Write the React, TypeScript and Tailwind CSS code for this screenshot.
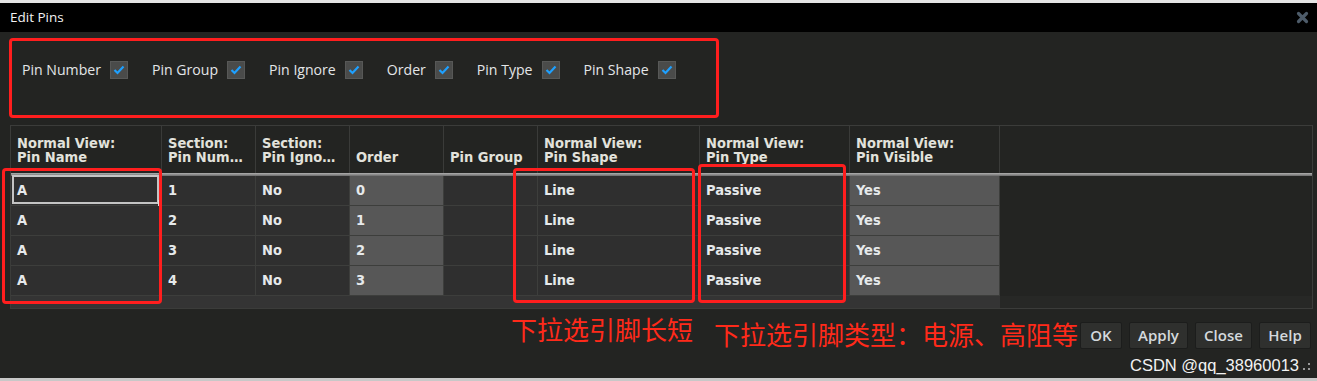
import React from 'react';

const CELL_FONT = { fontFamily: '"DejaVu Sans Condensed", "DejaVu Sans", sans-serif' };
const UI_FONT = { fontFamily: '"Open Sans", "Noto Sans", sans-serif' };
const CJK_FONT = { fontFamily: '"Noto Sans CJK SC", "Noto Sans", sans-serif' };

const columns = [
  { w: 'w-[151px]', head: ['Normal View:', 'Pin Name'], light: false, vals: ['A', 'A', 'A', 'A'] },
  { w: 'w-[94px]', head: ['Section:', 'Pin Num…'], light: false, vals: ['1', '2', '3', '4'] },
  { w: 'w-[94px]', head: ['Section:', 'Pin Igno…'], light: false, vals: ['No', 'No', 'No', 'No'] },
  { w: 'w-[94px]', head: ['Order'], light: true, vals: ['0', '1', '2', '3'] },
  { w: 'w-[94px]', head: ['Pin Group'], light: false, vals: ['', '', '', ''] },
  { w: 'w-[162px]', head: ['Normal View:', 'Pin Shape'], light: false, vals: ['Line', 'Line', 'Line', 'Line'] },
  { w: 'w-[150px]', head: ['Normal View:', 'Pin Type'], light: false, vals: ['Passive', 'Passive', 'Passive', 'Passive'] },
  { w: 'w-[150px]', head: ['Normal View:', 'Pin Visible'], light: true, vals: ['Yes', 'Yes', 'Yes', 'Yes'] },
];

const toggles = ['Pin Number', 'Pin Group', 'Pin Ignore', 'Order', 'Pin Type', 'Pin Shape'];

function Check() {
  return (
    <div className="w-[18px] h-[18px] bg-[#4a4b4a] border border-[#575857] flex items-center justify-center">
      <svg width="12" height="10" viewBox="0 0 12 10">
        <path d="M1.5 5 L4.5 8 L10.5 1.5" fill="none" stroke="#1ea0ff" strokeWidth="2.2" />
      </svg>
    </div>
  );
}

function PinTable() {
  return (
    <div className="ml-[10px] w-[1303px] border border-[#3b3c3a] bg-[#232422]" style={CELL_FONT}>
      {/* header */}
      <div className="flex h-[47px]">
        {columns.map((c, i) => (
          <div
            key={i}
            className={`${c.w} shrink-0 border-r border-[#3a3b39] flex flex-col justify-end pb-[9px] pl-[6px] text-[14.5px] leading-[14px] font-bold text-[#e2e2dc]`}
          >
            {c.head.map((h) => (
              <span key={h} className="whitespace-nowrap">{h}</span>
            ))}
          </div>
        ))}
        <div className="flex-1" />
      </div>
      <div className="h-[3px] bg-gradient-to-b from-[#b0b0b0] to-[#6c6c6c]" />
      {/* rows */}
      {[0, 1, 2, 3].map((r) => (
        <div key={r} className="flex h-[30px]">
          {columns.map((c, i) => (
            <div
              key={i}
              className={`${c.w} shrink-0 relative border-r border-b border-[#3d3e3c] flex items-center pl-[6px] text-[14.5px] font-bold text-[#e6e9eb] ${c.light ? 'bg-[#575757]' : 'bg-[#2f2f2f]'}`}
            >
              {c.vals[r]}
              {r === 0 && i === 0 && (
                <>
                  <div className="absolute left-[1px] top-[-1px] right-[2px] bottom-[1px] border-2 border-[#c4c4c4]" />
                  <div className="absolute right-[-3px] bottom-[-2px] w-[6px] h-[7px] bg-[#e0e0e0]" />
                </>
              )}
            </div>
          ))}
          <div className="flex-1 border-b border-[#232422]" />
        </div>
      ))}
      <div className="flex h-[12px]">
        <div className="w-[989px] bg-[#343434]" />
        <div className="flex-1 bg-[#272826]" />
      </div>
    </div>
  );
}

export default function App() {
  return (
    <div className="w-[1317px] h-[381px] relative overflow-hidden bg-[#232422]">
      <div className="h-[3px] bg-[#e4e4e4]" />
      {/* title bar */}
      <div className="h-[29px] bg-black flex items-center justify-between pl-[10px] pr-[8px]">
        <span className="text-[13.5px] text-[#f2f2f2]" style={UI_FONT}>Edit Pins</span>
        <svg width="13" height="13" viewBox="0 0 13 13">
          <path d="M2.5 2.5 L10.5 10.5 M10.5 2.5 L2.5 10.5" stroke="#4d5b69" strokeWidth="3.2" strokeLinecap="round" />
        </svg>
      </div>

      {/* column toggles */}
      <div className="h-[93px] pt-[29px] pl-[22px] flex items-start" style={UI_FONT}>
        {toggles.map((t) => (
          <div key={t} className="flex items-center h-[18px] mr-[24px]">
            <span className="text-[14.1px] text-[#e3e6e8] mr-[9px] leading-[18px]">{t}</span>
            <Check />
          </div>
        ))}
      </div>

      <PinTable />

      {/* footer */}
      <div className="flex flex-col items-end pr-[6px] pt-[13px]">
        <div className="flex gap-[7px]" style={UI_FONT}>
          {[
            ['OK', 'w-[42px]'],
            ['Apply', 'w-[59px]'],
            ['Close', 'w-[57px]'],
            ['Help', 'w-[52px]'],
          ].map(([label, w]) => (
            <button
              key={label}
              className={`${w} h-[27px] bg-[#2f302e] border border-[#1c1d1c] rounded-[2px] text-[15px] font-semibold text-[#d4d9dd] flex items-center justify-center`}
            >
              {label}
            </button>
          ))}
        </div>
        <div className="flex items-center mt-[6px]">
          <span className="text-[16.5px] text-[#f2f2f2] leading-[20px]" style={{ fontFamily: '"Liberation Sans", Arial, sans-serif' }}>
            CSDN @qq_38960013
          </span>
          <svg width="8" height="10" viewBox="0 0 8 10" className="ml-[4px] mt-[4px]">
            <rect x="5" y="1" width="2" height="2" fill="#9a9a9a" />
            <rect x="5" y="6" width="2" height="2" fill="#9a9a9a" />
            <rect x="0" y="6" width="2" height="2" fill="#9a9a9a" />
          </svg>
        </div>
      </div>

      <div className="absolute left-0 right-0 bottom-0 h-[3px] bg-[#c8c8c8]" />

      {/* red annotations */}
      <div className="absolute left-[9px] top-[38px] w-[710px] h-[80px] border-[3px] border-[#ff1e1e] rounded-[4px]" />
      <div className="absolute left-[2px] top-[168px] w-[160px] h-[136px] border-[3px] border-[#ff1e1e] rounded-[4px]" />
      <div className="absolute left-[513px] top-[168px] w-[182px] h-[135px] border-[3px] border-[#ff1e1e] rounded-[4px]" />
      <div className="absolute left-[698px] top-[164px] w-[148px] h-[139px] border-[3px] border-[#ff1e1e] rounded-[4px]" />
      <div className="absolute left-[511px] top-[314px] text-[26px] leading-[30px] text-[#ff2a1a]" style={CJK_FONT}>
        下拉选引脚长短
      </div>
      <div className="absolute left-[714px] top-[319px] text-[26px] leading-[30px] text-[#ff2a1a]" style={CJK_FONT}>
        下拉选引脚类型：电源、高阻等
      </div>
    </div>
  );
}
